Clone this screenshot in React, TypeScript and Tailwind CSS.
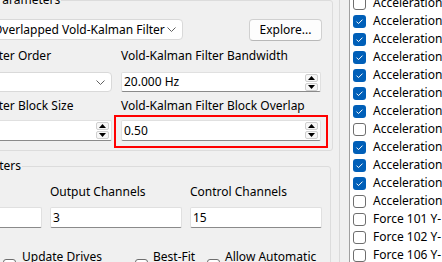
import React from "react";

function Chevron() {
  return (
    <svg width="9" height="5" viewBox="0 0 9 5" className="flex-none">
      <path d="M0.5 0.5 L4.5 4.5 L8.5 0.5" fill="none" stroke="#606060" strokeWidth="1" />
    </svg>
  );
}

function Spinner() {
  return (
    <div className="flex flex-col gap-px flex-none">
      <div className="w-[13px] h-[8px] bg-[#f7f7f7] border border-[#d0d0d0] rounded-[2px] flex items-center justify-center">
        <svg width="7" height="4" viewBox="0 0 7 4"><path d="M3.5 0 L7 4 L0 4 Z" fill="#000" /></svg>
      </div>
      <div className="w-[13px] h-[8px] bg-[#f7f7f7] border border-[#d0d0d0] rounded-[2px] flex items-center justify-center">
        <svg width="7" height="4" viewBox="0 0 7 4"><path d="M0 0 L7 0 L3.5 4 Z" fill="#000" /></svg>
      </div>
    </div>
  );
}

function TextBox({ value, spin, h = "h-[21px]" }: { value: string; spin?: boolean; h?: string }) {
  return (
    <div className={`${h} bg-white border border-[#e0e0e0] border-b-[#8a8a8a] rounded-[2px] flex items-center pl-[2px] pr-[2px]`}>
      <span className="flex-1 whitespace-nowrap overflow-hidden">{value}</span>
      {spin && <Spinner />}
    </div>
  );
}

function Combo({ value, h = "h-[21px]" }: { value: string; h?: string }) {
  return (
    <div className={`${h} bg-white border border-[#d9d9d9] rounded-[4px] flex items-center pl-[8px] pr-[6px]`}>
      <span className="flex-1 whitespace-nowrap overflow-hidden">{value}</span>
      <Chevron />
    </div>
  );
}

function Check({ checked }: { checked: boolean }) {
  return checked ? (
    <div className="w-[13px] h-[13px] rounded-[3px] bg-[#005fb8] flex items-center justify-center flex-none">
      <svg width="13" height="13" viewBox="0 0 13 13">
        <path d="M3.5 6.6 L5.5 8.6 L9.5 4.6" fill="none" stroke="#fff" strokeWidth="1" />
      </svg>
    </div>
  ) : (
    <div className="w-[13px] h-[13px] rounded-[3px] bg-white border border-[#6e6e6e] flex-none" />
  );
}

const rows: [string, boolean][] = [
  ["Acceleration 1 X+", false],
  ["Acceleration 2 X+", true],
  ["Acceleration 3 Y+", true],
  ["Acceleration 4 Z+", true],
  ["Acceleration 5 X+", true],
  ["Acceleration 6 Y+", true],
  ["Acceleration 7 Z+", true],
  ["Acceleration 8 X+", false],
  ["Acceleration 9 Y+", true],
  ["Acceleration 10 Z+", true],
  ["Acceleration 11 X+", true],
  ["Acceleration 12 Y+", false],
  ["Force 101 Y-", false],
  ["Force 102 Y-", false],
  ["Force 106 Y-", false],
];

export default function App() {
  return (
    <div className="w-[442px] h-[262px] overflow-hidden bg-[#f0f0f0] flex text-[12px] leading-[16px] text-black font-['Noto_Sans',sans-serif]">
      {/* left panel */}
      <div className="w-[339px] flex-none overflow-hidden">
        <div className="-ml-[100px] w-[433px]">
          {/* group 1 */}
          <div className="relative h-[151px] border border-[#dcdcdc] rounded-[3px] pl-[11px] pr-[10px] pt-[18px]">
            <span className="absolute -top-[9px] left-[93px] bg-[#f0f0f0] px-px">Parameters</span>
            <div className="flex">
              <div className="w-[199px] ml-[72px]"><Combo value="Overlapped Vold-Kalman Filter" /></div>
              <div className="flex-1" />
              <button className="w-[73px] h-[22px] bg-[#fdfdfd] border border-[#d0d0d0] border-b-[#b8b8b8] rounded-[4px] flex items-center justify-center">Explore...</button>
            </div>
            <div className="grid grid-cols-[200px_200px] gap-x-[9px] mt-[7px]">
              <div className="whitespace-nowrap">Vold-Kalman Filter Order</div>
              <div className="whitespace-nowrap">Vold-Kalman Filter Bandwidth</div>
              <div className="mt-[8px]"><Combo value="2" h="h-[20px]" /></div>
              <div className="mt-[8px]"><TextBox value="20.000 Hz" spin h="h-[20px]" /></div>
              <div className="whitespace-nowrap mt-[6px]">Vold-Kalman Filter Block Size</div>
              <div className="whitespace-nowrap mt-[6px]">Vold-Kalman Filter Block Overlap</div>
              <div className="mt-[6px]"><TextBox value="4096" spin /></div>
              <div className="mt-[6px] relative">
                <TextBox value="0.50" spin />
                <div className="absolute -left-[7px] -top-[5px] -right-[7px] -bottom-[7px] border-2 border-[#ff0000] pointer-events-none" />
              </div>
            </div>
          </div>
          {/* group 2 */}
          <div className="relative mt-[15px] h-[120px] w-[431px] border border-[#dcdcdc] rounded-[3px] pl-[9px] pr-[8px] pt-[17px]">
            <span className="absolute -top-[9px] left-[21px] bg-[#f0f0f0] px-px">Drive Parameters</span>
            <div className="grid grid-cols-3 gap-x-[8px]">
              <div className="whitespace-nowrap">Input Channels</div>
              <div className="whitespace-nowrap">Output Channels</div>
              <div className="whitespace-nowrap">Control Channels</div>
              <div className="mt-[7px]"><TextBox value="4" /></div>
              <div className="mt-[7px]"><TextBox value="3" /></div>
              <div className="mt-[7px]"><TextBox value="15" /></div>
            </div>
            <div className="flex mt-[21px] items-start">
              <div className="w-[93px] flex items-center gap-[6px]"><Check checked={false} /><span className="leading-[16px]">Lock<br />Drives</span></div>
              <div className="w-[132px] flex items-center gap-[6px]"><Check checked={false} /><span className="leading-[16px]">Update Drives<br />Automatically</span></div>
              <div className="w-[72px] flex items-center gap-[5px]"><Check checked={false} /><span className="leading-[16px]">Best-Fit<br />Scaling</span></div>
              <div className="flex items-center gap-[5px]"><Check checked={false} /><span className="leading-[16px] whitespace-nowrap">Allow Automatic<br />Restart</span></div>
            </div>
          </div>
        </div>
      </div>
      {/* splitter */}
      <div className="w-px flex-none bg-[#dadada]" />
      <div className="w-[9px] flex-none" />
      {/* list */}
      <div className="flex-1 bg-white border-l border-[#a0a0a0] overflow-hidden">
        <div className="-mt-[6px] pl-[3px]">
          {rows.map(([t, c], i) => (
            <div key={i} className="h-[18px] flex items-center gap-[7px] whitespace-nowrap">
              <Check checked={c} />
              <span>{t}</span>
            </div>
          ))}
        </div>
      </div>
    </div>
  );
}
